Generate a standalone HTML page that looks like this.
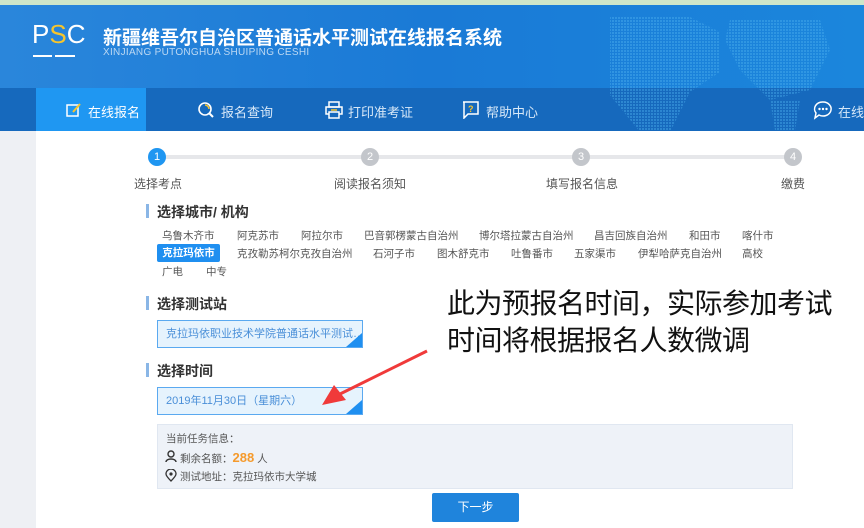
<!DOCTYPE html>
<html><head><meta charset="utf-8"><style>
*{margin:0;padding:0;box-sizing:border-box}
body{width:864px;height:528px;overflow:hidden;position:relative;background:#fff;font-family:"Liberation Sans","Noto Sans CJK SC",sans-serif;color:#333}
.a{position:absolute;white-space:nowrap}
.top{left:0;top:0;width:864px;height:5px;background:#cfe6c9}
.hdr{left:0;top:5px;width:864px;height:126px;background:linear-gradient(90deg,#2a86db 0%,#1a7ad6 50%,#1b86dc 100%)}
.nav{left:0;top:88px;width:864px;height:43px;background:#1669bd}
.act{left:36px;top:88px;width:110px;height:43px;background:#1f97f2}
.navt{color:#d7e8f8;font-size:13px;top:102px}
.gray{left:0;top:131px;width:36px;height:397px;background:#eef0f4}
.c{width:18px;height:18px;border-radius:50%;background:#c3c6cb;color:#fff;font-size:11px;text-align:center;line-height:18px;top:148px}
.sl{font-size:12px;color:#555;top:175px}
.h{font-size:14px;font-weight:bold;color:#333}
.bar{width:3px;height:14px;background:#8ab6e6}
.ct{font-size:10.5px;color:#555}
.box{left:157px;width:206px;height:28px;border:1px solid #5aa9f0;background:#e6f3fd;color:#4a8fd8;font-size:11px;line-height:26px;padding-left:8px;overflow:hidden}
.tri{position:absolute;right:0;bottom:0;width:0;height:0;border-left:16px solid transparent;border-bottom:14px solid #1f8ff0}
</style></head><body>
<div class="a top"></div>
<div class="a hdr"></div>
<div class="a nav"></div>
<div class="a act"></div>
<svg class="a" style="left:600px;top:5px" width="264" height="126"><defs><pattern id="d" width="3" height="3" patternUnits="userSpaceOnUse"><rect width="2" height="2" fill="#4fb3f0"/></pattern></defs><g fill="url(#d)" opacity=".4">
<path d="M10 12h80l30 15v40l-30 20-20 40H40L10 90z"/><path d="M130 15h90l10 30-20 40-40 10-30-30-15-30z"/><path d="M170 95h30l-5 30h-20z"/></g></svg>
<div class="a" style="left:32px;top:19px;color:#fff;font-size:26px;letter-spacing:0px">P<span style="color:#f7c52c">S</span>C</div>
<div class="a" style="left:33px;top:55px;width:19px;height:2px;background:#fff"></div>
<div class="a" style="left:55px;top:55px;width:20px;height:2px;background:#fff"></div>
<div class="a" style="left:103px;top:23px;color:#fff;font-size:19px;font-weight:bold">新疆维吾尔自治区普通话水平测试在线报名系统</div>
<div class="a" style="left:103px;top:47px;color:#bcd8f3;font-size:10px;letter-spacing:.3px">XINJIANG PUTONGHUA SHUIPING CESHI</div>
<svg class="a" style="left:66px;top:102px" width="16" height="16"><rect x="1" y="3" width="11" height="11" fill="none" stroke="#fff" stroke-width="1.5"/><path d="M7 10l7-8" stroke="#f7c52c" stroke-width="2"/></svg>
<div class="a navt" style="left:88px;color:#fff">在线报名</div>
<svg class="a" style="left:197px;top:101px" width="18" height="18"><circle cx="8" cy="8" r="6" fill="none" stroke="#fff" stroke-width="1.6"/><path d="M12 12l4 4" stroke="#fff" stroke-width="2"/><path d="M8 4a4 4 0 0 1 4 4" stroke="#f7c52c" stroke-width="1.6" fill="none"/></svg>
<div class="a navt" style="left:221px">报名查询</div>
<svg class="a" style="left:325px;top:101px" width="18" height="18"><rect x="4" y="1" width="10" height="5" fill="none" stroke="#fff" stroke-width="1.5"/><rect x="1" y="6" width="16" height="7" fill="none" stroke="#fff" stroke-width="1.5"/><rect x="4" y="11" width="10" height="6" fill="#1669bd" stroke="#fff" stroke-width="1.5"/><path d="M6 9h6" stroke="#f7c52c" stroke-width="1.5"/></svg>
<div class="a navt" style="left:348px">打印准考证</div>
<svg class="a" style="left:462px;top:101px" width="18" height="18"><path d="M1 1h15v12H6l-4 4V1z" fill="none" stroke="#fff" stroke-width="1.5"/><text x="6" y="11" font-size="9" fill="#f7c52c" font-weight="bold">?</text></svg>
<div class="a navt" style="left:486px">帮助中心</div>
<svg class="a" style="left:813px;top:100px" width="20" height="20"><path d="M10 2a8 7 0 1 1-4 13l-4 3 1-5A8 7 0 0 1 10 2z" fill="none" stroke="#fff" stroke-width="1.5"/><circle cx="6.5" cy="9" r="1.2" fill="#fff"/><circle cx="10" cy="9" r="1.2" fill="#fff"/><circle cx="13.5" cy="9" r="1.2" fill="#fff"/></svg>
<div class="a navt" style="left:838px">在线</div>
<div class="a gray"></div>
<div class="a" style="left:160px;top:155px;width:630px;height:4px;background:#e6e7ea"></div>
<div class="a c" style="left:148px;background:#1f96f1">1</div>
<div class="a c" style="left:361px">2</div>
<div class="a c" style="left:572px">3</div>
<div class="a c" style="left:784px">4</div>
<div class="a sl" style="left:134px">选择考点</div>
<div class="a sl" style="left:334px">阅读报名须知</div>
<div class="a sl" style="left:546px">填写报名信息</div>
<div class="a sl" style="left:781px">缴费</div>
<div class="a bar" style="left:146px;top:204px"></div>
<div class="a h" style="left:157px;top:202px">选择城市/ 机构</div>
<div class="a ct" style="left:162px;top:228px">乌鲁木齐市</div>
<div class="a ct" style="left:237px;top:228px">阿克苏市</div>
<div class="a ct" style="left:301px;top:228px">阿拉尔市</div>
<div class="a ct" style="left:364px;top:228px">巴音郭楞蒙古自治州</div>
<div class="a ct" style="left:479px;top:228px">博尔塔拉蒙古自治州</div>
<div class="a ct" style="left:594px;top:228px">昌吉回族自治州</div>
<div class="a ct" style="left:689px;top:228px">和田市</div>
<div class="a ct" style="left:742px;top:228px">喀什市</div>
<div class="a ct" style="left:157px;top:244px;width:63px;height:18px;background:#1f8ff0;color:#fff;font-weight:bold;border-radius:2px;text-align:center;line-height:18px">克拉玛依市</div>
<div class="a ct" style="left:237px;top:246px">克孜勒苏柯尔克孜自治州</div>
<div class="a ct" style="left:373px;top:246px">石河子市</div>
<div class="a ct" style="left:437px;top:246px">图木舒克市</div>
<div class="a ct" style="left:511px;top:246px">吐鲁番市</div>
<div class="a ct" style="left:574px;top:246px">五家渠市</div>
<div class="a ct" style="left:638px;top:246px">伊犁哈萨克自治州</div>
<div class="a ct" style="left:742px;top:246px">高校</div>
<div class="a ct" style="left:162px;top:264px">广电</div>
<div class="a ct" style="left:206px;top:264px">中专</div>
<div class="a bar" style="left:146px;top:296px"></div>
<div class="a h" style="left:157px;top:294px">选择测试站</div>
<div class="a box" style="top:320px">克拉玛依职业技术学院普通话水平测试…<div class="tri"></div></div>
<div class="a bar" style="left:146px;top:363px"></div>
<div class="a h" style="left:157px;top:361px">选择时间</div>
<div class="a box" style="top:387px">2019年11月30日（星期六）<div class="tri"></div></div>
<div class="a" style="left:157px;top:424px;width:636px;height:65px;background:#eef2f8;border:1px solid #e0e7f1"></div>
<div class="a ct" style="left:166px;top:431px">当前任务信息：</div>
<svg class="a" style="left:165px;top:450px" width="12" height="12"><circle cx="6" cy="4" r="3" fill="none" stroke="#333" stroke-width="1.4"/><path d="M1 12c0-4 10-4 10 0" fill="none" stroke="#333" stroke-width="1.4"/></svg>
<div class="a ct" style="left:180px;top:450px">剩余名额：<span style="color:#f59a2c;font-weight:bold;font-size:13px">288</span> 人</div>
<svg class="a" style="left:165px;top:469px" width="12" height="13"><path d="M6 12C2 8 1 6 1 5a5 5 0 0 1 10 0c0 1-1 3-5 7z" fill="none" stroke="#333" stroke-width="1.3"/><circle cx="6" cy="5" r="1.6" fill="#333"/></svg>
<div class="a ct" style="left:180px;top:469px">测试地址：克拉玛依市大学城</div>
<div class="a" style="left:432px;top:493px;width:87px;height:29px;background:#1f84dc;border-radius:2px;color:#fff;font-size:12px;text-align:center;line-height:29px">下一步</div>
<div class="a" style="left:447px;top:285px;font-size:28px;letter-spacing:-0.5px;color:#111;line-height:37px">此为预报名时间，实际参加考试<br>时间将根据报名人数微调</div>
<svg class="a" style="left:310px;top:345px" width="125" height="70"><path d="M117 6L28 50" stroke="#f03a3a" stroke-width="3"/><path d="M12 60L24 40L36 55Z" fill="#f03a3a"/></svg>
</body></html>
